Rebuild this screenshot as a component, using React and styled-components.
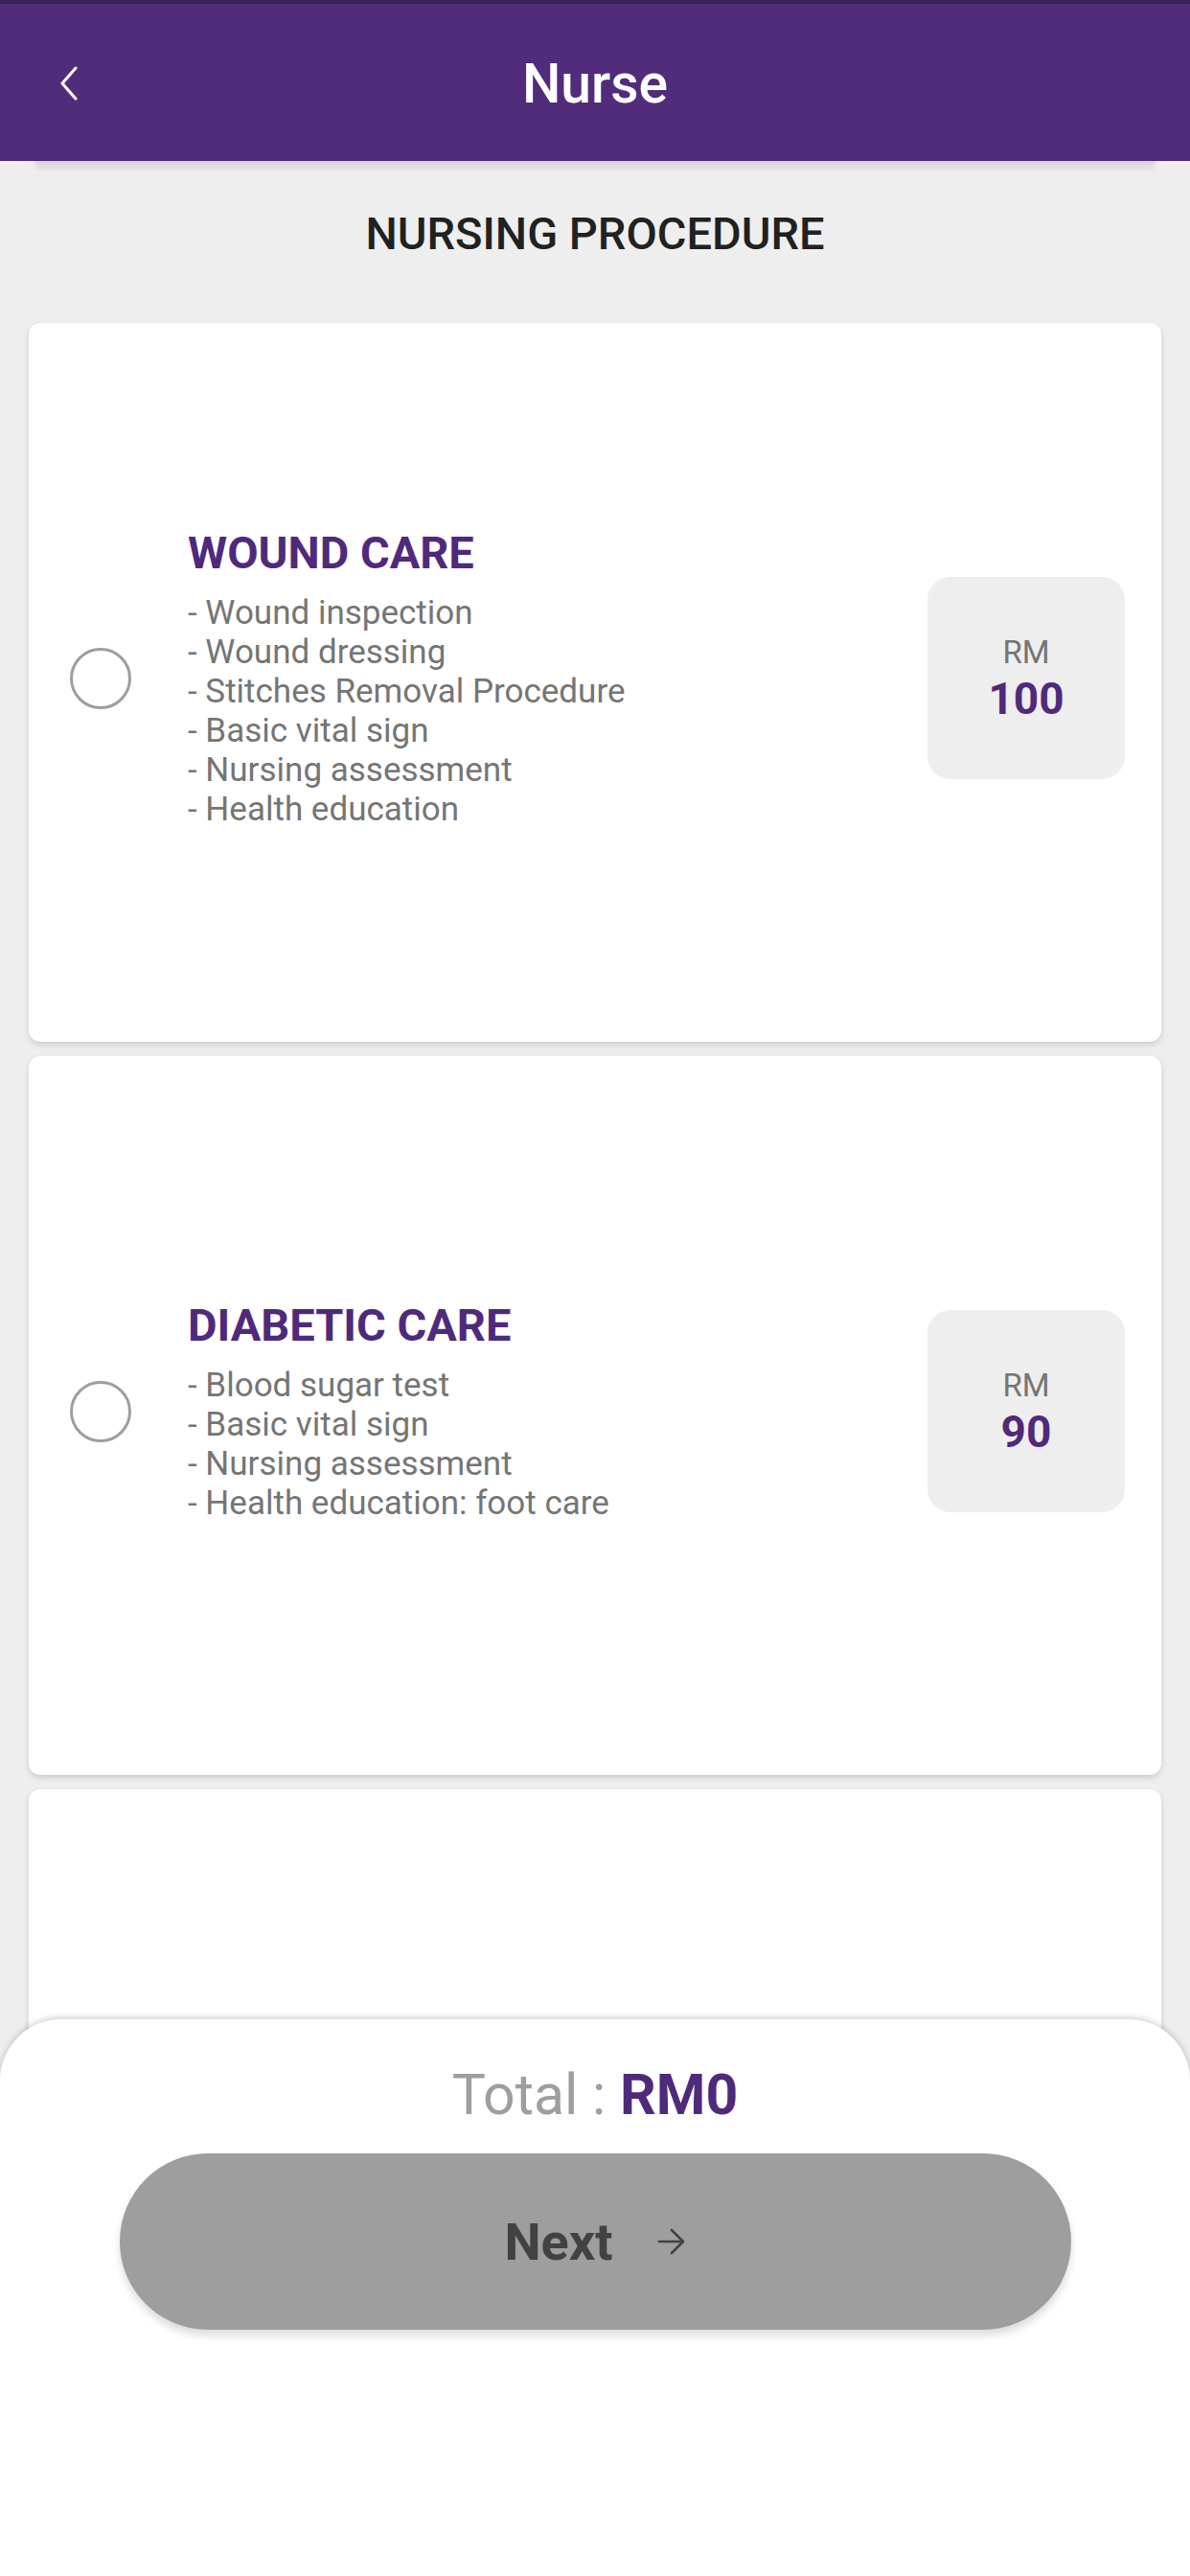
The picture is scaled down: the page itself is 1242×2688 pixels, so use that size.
import React from 'react';
import styled, { createGlobalStyle } from 'styled-components';

const GlobalStyle = createGlobalStyle`
  html, body {
    margin: 0;
    padding: 0;
    background: #eeeeee;
  }
  * {
    box-sizing: border-box;
  }
`;

const Page = styled.div`
  position: relative;
  width: 1242px;
  height: 2688px;
  overflow: hidden;
  background: #eeeeee;
  font-family: Roboto, 'Noto Sans', sans-serif;
  display: flex;
  flex-direction: column;
`;

const StatusStrip = styled.div`
  height: 4px;
  background: #3c2257;
`;

const Header = styled.header`
  position: relative;
  z-index: 2;
  height: 164px;
  background: #512c7a;
  display: grid;
  grid-template-columns: 160px 1fr 160px;
  align-items: center;
`;

const BackButton = styled.button`
  justify-self: start;
  margin-left: 56px;
  width: 32px;
  height: 44px;
  padding: 0;
  border: 0;
  background: transparent;
  display: flex;
  align-items: center;
  justify-content: center;
  margin-top: 2px;
`;

const Title = styled.h1`
  margin: 0;
  text-align: center;
  color: #ffffff;
  font-size: 57px;
  font-weight: 500;
  line-height: 66px;
  margin-top: 4px;
`;

const HeaderEdge = styled.div`
  margin: 0 36px;
  height: 4px;
  background: #d9d6dc;
  border-radius: 0 0 6px 6px;
  box-shadow: 0 3px 6px rgba(0, 0, 0, 0.12);
`;

const SectionTitle = styled.h2`
  margin: 45px 0 66px;
  text-align: center;
  color: #212121;
  font-size: 47px;
  font-weight: 500;
  line-height: 54px;
`;

const List = styled.div`
  display: flex;
  flex-direction: column;
  gap: 15px;
  padding: 0 30px;
`;

const Card = styled.div`
  height: 750px;
  flex-shrink: 0;
  background: #ffffff;
  border-radius: 12px;
  box-shadow: 0 3px 6px rgba(0, 0, 0, 0.14);
  display: flex;
  align-items: center;
  padding: 0 38px 9px 43px;
`;

const Radio = styled.span`
  width: 64px;
  height: 64px;
  flex-shrink: 0;
  border-radius: 50%;
  border: 3px solid #9e9e9e;
`;

const Info = styled.div`
  flex: 1;
  margin-left: 59px;
  display: flex;
  flex-direction: column;
`;

const ServiceName = styled.div`
  color: #4f2a7a;
  font-size: 47px;
  font-weight: 700;
  line-height: 54px;
  margin-bottom: 15px;
`;

const Item = styled.div`
  color: #757575;
  font-size: 35px;
  line-height: 41px;
`;

const PriceBox = styled.div`
  width: 206px;
  height: 211px;
  flex-shrink: 0;
  border-radius: 24px;
  background: #eeeeee;
  display: flex;
  flex-direction: column;
  align-items: center;
  justify-content: center;
  gap: 4px;
`;

const Currency = styled.div`
  color: #757575;
  font-size: 33px;
  line-height: 38px;
`;

const Amount = styled.div`
  color: #4f2a7a;
  font-size: 46px;
  font-weight: 700;
  line-height: 50px;
`;

const BottomSheet = styled.div`
  position: absolute;
  left: 0;
  right: 0;
  bottom: 0;
  height: 581px;
  z-index: 3;
  background: #ffffff;
  border-radius: 64px 64px 0 0;
  box-shadow: 0 -2px 6px rgba(0, 0, 0, 0.18);
  display: flex;
  flex-direction: column;
  align-items: center;
  padding-top: 45px;
`;

const Total = styled.div`
  color: #9e9e9e;
  font-size: 59px;
  line-height: 68px;

  strong {
    color: #4f2a7a;
    font-weight: 700;
  }
`;

const NextButton = styled.button`
  margin-top: 27px;
  width: 993px;
  height: 184px;
  border: 0;
  border-radius: 92px;
  background: #9e9e9e;
  box-shadow: 0 6px 8px rgba(0, 0, 0, 0.14);
  display: flex;
  align-items: center;
  justify-content: center;
  gap: 46px;
  font-family: Roboto, 'Noto Sans', sans-serif;
  color: #424242;
  font-size: 54px;
  font-weight: 700;
  padding: 0;
`;

const services = [
  {
    name: 'WOUND CARE',
    price: 100,
    items: [
      'Wound inspection',
      'Wound dressing',
      'Stitches Removal Procedure',
      'Basic vital sign',
      'Nursing assessment',
      'Health education',
    ],
  },
  {
    name: 'DIABETIC CARE',
    price: 90,
    items: [
      'Blood sugar test',
      'Basic vital sign',
      'Nursing assessment',
      'Health education: foot care',
    ],
  },
];

const ChevronLeft = () => (
  <svg width="22" height="36" viewBox="0 0 22 36" fill="none">
    <path d="M18 2 L4 18 L18 34" stroke="#ffffff" strokeWidth="3" strokeLinecap="round" strokeLinejoin="round" />
  </svg>
);

const ArrowRight = () => (
  <svg width="30" height="28" viewBox="0 0 30 28" fill="none">
    <path d="M2 14 H27 M15 2 L27 14 L15 26" stroke="#424242" strokeWidth="2.6" strokeLinecap="round" strokeLinejoin="round" />
  </svg>
);

const App = () => {
  return (
    <Page>
      <GlobalStyle />
      <StatusStrip />
      <Header>
        <BackButton aria-label="Back">
          <ChevronLeft />
        </BackButton>
        <Title>Nurse</Title>
        <span />
      </Header>
      <HeaderEdge />
      <SectionTitle>NURSING PROCEDURE</SectionTitle>
      <List>
        {services.map((service) => (
          <Card key={service.name}>
            <Radio />
            <Info>
              <ServiceName>{service.name}</ServiceName>
              {service.items.map((item) => (
                <Item key={item}>- {item}</Item>
              ))}
            </Info>
            <PriceBox>
              <Currency>RM</Currency>
              <Amount>{service.price}</Amount>
            </PriceBox>
          </Card>
        ))}
        <Card />
      </List>
      <BottomSheet>
        <Total>
          Total : <strong>RM0</strong>
        </Total>
        <NextButton>
          Next
          <ArrowRight />
        </NextButton>
      </BottomSheet>
    </Page>
  );
};

export default App;
